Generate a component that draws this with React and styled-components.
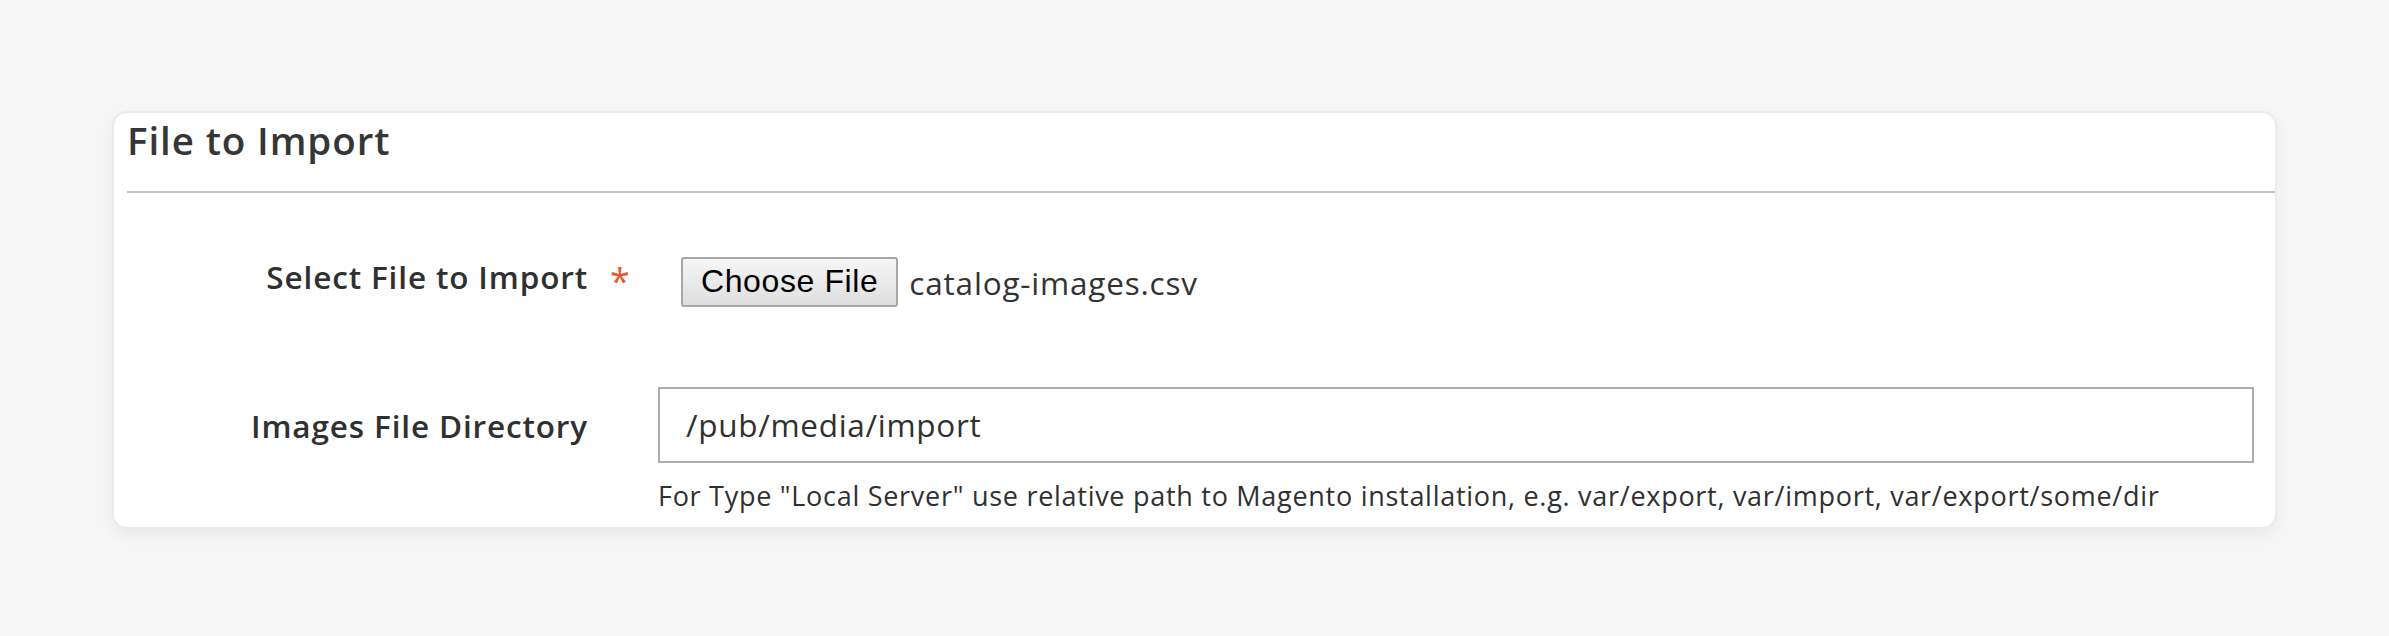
import styled, { createGlobalStyle } from "styled-components";

const GlobalStyle = createGlobalStyle`
  html, body {
    margin: 0;
    padding: 0;
    background-color: #f6f6f6;
    font-family: "Open Sans", "Liberation Sans", sans-serif;
  }
`;

const Page = styled.div`
  padding: 111px 112px;
`;

const Card = styled.section`
  background-color: #ffffff;
  border: 2px solid #ebebeb;
  border-radius: 15px;
  box-shadow: 0 6px 16px rgba(0, 0, 0, 0.05);
  padding: 5px 0 14px;
`;

const Title = styled.h2`
  margin: 0 0 27px 13px;
  font-size: 38.5px;
  line-height: 45.6px;
  font-weight: 600;
  letter-spacing: 0.9px;
  color: #363636;
`;

const Divider = styled.hr`
  margin: 0 0 64px 13px;
  border: none;
  height: 2px;
  background-color: #cbc1b5;
`;

const Fields = styled.div`
  display: flex;
  flex-direction: column;
  gap: 80px;
  padding-right: 21px;
`;

const Row = styled.div`
  display: grid;
  grid-template-columns: 544px 1fr;
  align-items: start;
`;

const Label = styled.label`
  position: relative;
  justify-self: end;
  margin-right: 70px;
  padding-top: ${(p) => p.$offset}px;
  font-size: 31.5px;
  line-height: 37.8px;
  font-weight: 600;
  letter-spacing: 0.85px;
  color: #303030;

  &::after {
    content: ${(p) => (p.$required ? '"*"' : "none")};
    position: absolute;
    left: calc(100% + 22px);
    top: ${(p) => p.$offset + 4}px;
    font-size: 36px;
    line-height: 38px;
    font-weight: 400;
    color: #e5582e;
  }
`;

const Control = styled.div`
  display: flex;
  flex-direction: column;
`;

const FilePicker = styled.div`
  display: flex;
  align-items: center;
  gap: 11px;
  padding-left: 23px;
`;

const ChooseButton = styled.button`
  height: 50px;
  padding: 0 18px;
  border: 2px solid #a7a7a7;
  border-radius: 3px;
  background: linear-gradient(#f6f6f6, #dedede);
  font-family: "Liberation Sans", Arial, sans-serif;
  font-size: 32px;
  letter-spacing: 0.6px;
  color: #000000;
  cursor: pointer;
`;

const FileName = styled.span`
  font-size: 31.5px;
  line-height: 37.8px;
  letter-spacing: 0.8px;
  color: #333333;
  padding-top: 2px;
`;

const TextInput = styled.input`
  box-sizing: border-box;
  width: 100%;
  height: 76px;
  padding: 0 26px;
  border: 2px solid #adadad;
  border-radius: 0;
  font-family: "Open Sans", sans-serif;
  font-size: 31.5px;
  letter-spacing: 0.7px;
  color: #303030;
  outline: none;
`;

const Note = styled.div`
  margin: 15px 0 0 0;
  font-size: 27px;
  line-height: 35px;
  letter-spacing: 0.72px;
  color: #303030;
`;

export default function App() {
  return (
    <Page>
      <GlobalStyle />
      <Card>
        <Title>File to Import</Title>
        <Divider />
        <Fields>
          <Row>
            <Label $offset={1} $required>
              Select File to Import
            </Label>
            <Control>
              <FilePicker>
                <ChooseButton type="button">Choose File</ChooseButton>
                <FileName>catalog-images.csv</FileName>
              </FilePicker>
            </Control>
          </Row>
          <Row>
            <Label $offset={20}>Images File Directory</Label>
            <Control>
              <TextInput defaultValue="/pub/media/import" />
              <Note>
                For Type "Local Server" use relative path to Magento installation,
                e.g. var/export, var/import, var/export/some/dir
              </Note>
            </Control>
          </Row>
        </Fields>
      </Card>
    </Page>
  );
}
